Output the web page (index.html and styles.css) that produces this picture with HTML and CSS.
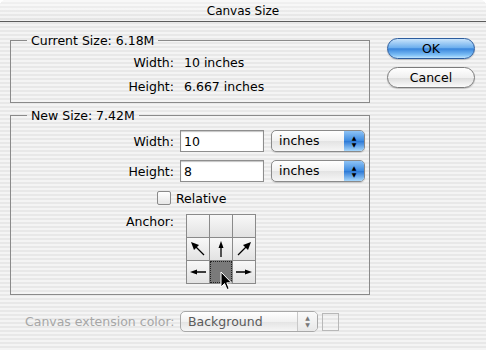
FILE: index.html
```html
<!DOCTYPE html>
<html lang="en">
<head>
    <meta charset="UTF-8">
    <title>Canvas Size</title>
    <link rel="stylesheet" href="styles.css">
</head>
<body>
    <div class="window">
        <div class="titlebar">Canvas Size</div>
        <div class="content">
            <div class="groups">
                <fieldset class="group group-current">
                    <legend>Current Size: 6.18M</legend>
                    <div class="info-row"><span class="label">Width:</span><span class="value">10 inches</span></div>
                    <div class="info-row"><span class="label">Height:</span><span class="value">6.667 inches</span></div>
                </fieldset>
                <fieldset class="group group-new">
                    <legend>New Size: 7.42M</legend>
                    <div class="field-row">
                        <label class="label" for="w">Width:</label>
                        <input id="w" class="textfield" type="text" value="10">
                        <div class="popup"><span class="popup-text">inches</span><span class="popup-arrows">&#9650;<br>&#9660;</span></div>
                    </div>
                    <div class="field-row">
                        <label class="label" for="h">Height:</label>
                        <input id="h" class="textfield" type="text" value="8">
                        <div class="popup"><span class="popup-text">inches</span><span class="popup-arrows">&#9650;<br>&#9660;</span></div>
                    </div>
                    <div class="check-row">
                        <span class="checkbox"></span>
                        <span>Relative</span>
                    </div>
                    <div class="anchor-row">
                        <span class="label">Anchor:</span>
                        <div class="anchor-grid">
                            <div class="cell"></div>
                            <div class="cell"></div>
                            <div class="cell"></div>
                            <div class="cell">
                                <svg viewBox="0 0 22 22" width="22" height="22"><line x1="17" y1="17" x2="8" y2="8" stroke="#000" stroke-width="1.3"/><polygon points="4,4 12,7 7,12" fill="#000"/></svg>
                            </div>
                            <div class="cell">
                                <svg viewBox="0 0 22 22" width="22" height="22"><line x1="11" y1="19" x2="11" y2="8" stroke="#000" stroke-width="1.3"/><polygon points="11,3 8.5,10 13.5,10" fill="#000"/></svg>
                            </div>
                            <div class="cell">
                                <svg viewBox="0 0 22 22" width="22" height="22"><line x1="5" y1="17" x2="14" y2="8" stroke="#000" stroke-width="1.3"/><polygon points="18,4 10,7 15,12" fill="#000"/></svg>
                            </div>
                            <div class="cell">
                                <svg viewBox="0 0 22 22" width="22" height="22"><line x1="19" y1="11" x2="8" y2="11" stroke="#000" stroke-width="1.3"/><polygon points="3,11 10,8.5 10,13.5" fill="#000"/></svg>
                            </div>
                            <div class="cell cell-selected"></div>
                            <div class="cell">
                                <svg viewBox="0 0 22 22" width="22" height="22"><line x1="3" y1="11" x2="14" y2="11" stroke="#000" stroke-width="1.3"/><polygon points="19,11 12,8.5 12,13.5" fill="#000"/></svg>
                            </div>
                        </div>
                    </div>
                </fieldset>
            </div>
            <div class="buttons">
                <button class="btn btn-default">OK</button>
                <button class="btn">Cancel</button>
            </div>
        </div>
        <div class="ext-row">
            <span class="ext-label">Canvas extension color:</span>
            <div class="popup popup-disabled"><span class="popup-text">Background</span><span class="popup-arrows">&#9650;<br>&#9660;</span></div>
            <span class="swatch"></span>
        </div>
        <svg class="cursor" viewBox="0 0 13 21" width="13" height="21"><path d="M1 1 L1 16 L4.5 12.5 L7 18.5 L9.2 17.6 L6.8 11.8 L11.5 11.8 Z" fill="#000" stroke="#fff" stroke-width="1"/></svg>
    </div>
</body>
</html>
```

FILE: styles.css
```css
body {
    margin: 0;
    background-color: #fff;
    font-family: "DejaVu Sans", "Liberation Sans", sans-serif;
    font-size: 12.5px;
    color: #000;
}
.window {
    position: relative;
    width: 486px;
    height: 350px;
    border-radius: 6px 6px 0 0;
    overflow: hidden;
    background: repeating-linear-gradient(to bottom, #f4f4f4 0, #f4f4f4 2px, #e8e8e8 2px, #e8e8e8 4px);
}
.titlebar {
    height: 21px;
    line-height: 22px;
    text-align: center;
    font-size: 12px;
    border-bottom: 1px solid #5c5c5c;
    background:
        linear-gradient(to bottom, rgba(255,255,255,0.5), rgba(255,255,255,0)),
        repeating-linear-gradient(to bottom, #f2f2f2 0, #f2f2f2 2px, #e4e4e4 2px, #e4e4e4 4px);
}
.content {
    display: flex;
    padding-left: 10px;
}
.groups {
    width: 360px;
    padding-top: 11px;
}
.group {
    margin: 0;
    padding: 0;
    border: 1px solid #8a8a8a;
    min-width: 0;
}
.group legend {
    margin-left: 16px;
    padding: 0 4px;
    line-height: 15px;
}
.group-current {
    height: 70px;
    box-sizing: border-box;
    padding-top: 2px;
}
.group-new {
    margin-top: 5px;
    height: 187px;
    box-sizing: border-box;
    padding-top: 7px;
}
.label {
    width: 163px;
    text-align: right;
    flex-shrink: 0;
}
.info-row {
    display: flex;
    height: 24px;
    align-items: center;
}
.info-row .value {
    margin-left: 10px;
}
.field-row {
    display: flex;
    align-items: center;
    gap: 6px;
    height: 22px;
    margin-bottom: 8px;
}
.textfield {
    width: 84px;
    height: 22px;
    box-sizing: border-box;
    margin: 0;
    padding: 0 3px;
    border: 1px solid #8e8e8e;
    box-shadow: inset 0 1px 1px #c4c4c4;
    font: inherit;
    background-color: #fff;
}
.popup {
    display: flex;
    width: 94px;
    height: 22px;
    box-sizing: border-box;
    border: 1px solid #8a8a8a;
    border-radius: 5px;
    overflow: hidden;
    margin-left: 1px;
    background: linear-gradient(to bottom, #ffffff, #f1f1f1 50%, #e3e3e3 51%, #f6f6f6);
    box-shadow: 0 1px 1px rgba(0,0,0,0.15);
}
.popup-text {
    flex: 1;
    padding-left: 7px;
    line-height: 20px;
}
.popup-arrows {
    width: 20px;
    font-size: 6px;
    line-height: 7px;
    text-align: center;
    padding-top: 3px;
    box-sizing: border-box;
    background: linear-gradient(to bottom, #8ec3f5, #3c8ae0 50%, #2b78d6 51%, #a6d6fb);
}
.check-row {
    display: flex;
    align-items: center;
    height: 16px;
    margin-left: 146px;
}
.checkbox {
    width: 12px;
    height: 12px;
    border: 1px solid #8a8a8a;
    border-radius: 2px;
    background: linear-gradient(to bottom, #ffffff, #e6e6e6);
    margin-right: 5px;
}
.anchor-row {
    display: flex;
    margin-top: 8px;
}
.anchor-row .label {
    line-height: 16px;
}
.anchor-grid {
    display: grid;
    grid-template-columns: repeat(3, 22px);
    grid-template-rows: repeat(3, 22px);
    gap: 1px;
    padding: 1px;
    margin-left: 12px;
    background-color: #8a8a8a;
}
.cell {
    background: linear-gradient(to bottom, #f8f8f8, #e2e2e2);
}
.cell svg {
    display: block;
}
.cell-selected {
    background: #7a7a7a;
    outline: 1px dotted #222;
    outline-offset: -1px;
}
.buttons {
    display: flex;
    flex-direction: column;
    gap: 8px;
    padding-top: 16px;
    margin-left: 17px;
}
.btn {
    width: 88px;
    height: 21px;
    padding: 0;
    border: 1px solid #7b7b7b;
    border-radius: 11px;
    font: inherit;
    line-height: 19px;
    color: #000;
    background: linear-gradient(to bottom, #ffffff, #f0f0f0 50%, #dcdcdc 51%, #fbfbfb);
    box-shadow: 0 1px 1px rgba(0,0,0,0.2);
}
.btn-default {
    border-color: #2d5d9e;
    background: linear-gradient(to bottom, #c9e4fb, #6fb0ee 45%, #3a86dc 52%, #7fc0f6 85%, #bfe4fd);
}
.ext-row {
    display: flex;
    align-items: center;
    padding-left: 25px;
    margin-top: 16px;
}
.ext-label {
    width: 155px;
    color: #a6a6a6;
}
.popup-disabled {
    width: 138px;
    height: 21px;
    margin-left: 0;
    border-color: #a8a8a8;
    color: #5a5a5a;
    box-shadow: none;
}
.popup-disabled .popup-text {
    line-height: 19px;
}
.popup-disabled .popup-arrows {
    color: #777;
    border-left: 1px solid #c8c8c8;
    padding-top: 2px;
    background: linear-gradient(to bottom, #fafafa, #e8e8e8);
}
.swatch {
    width: 15px;
    height: 16px;
    margin-left: 4px;
    border: 1px solid #b8b8b8;
}
.cursor {
    position: absolute;
    left: 220px;
    top: 271px;
}
```
